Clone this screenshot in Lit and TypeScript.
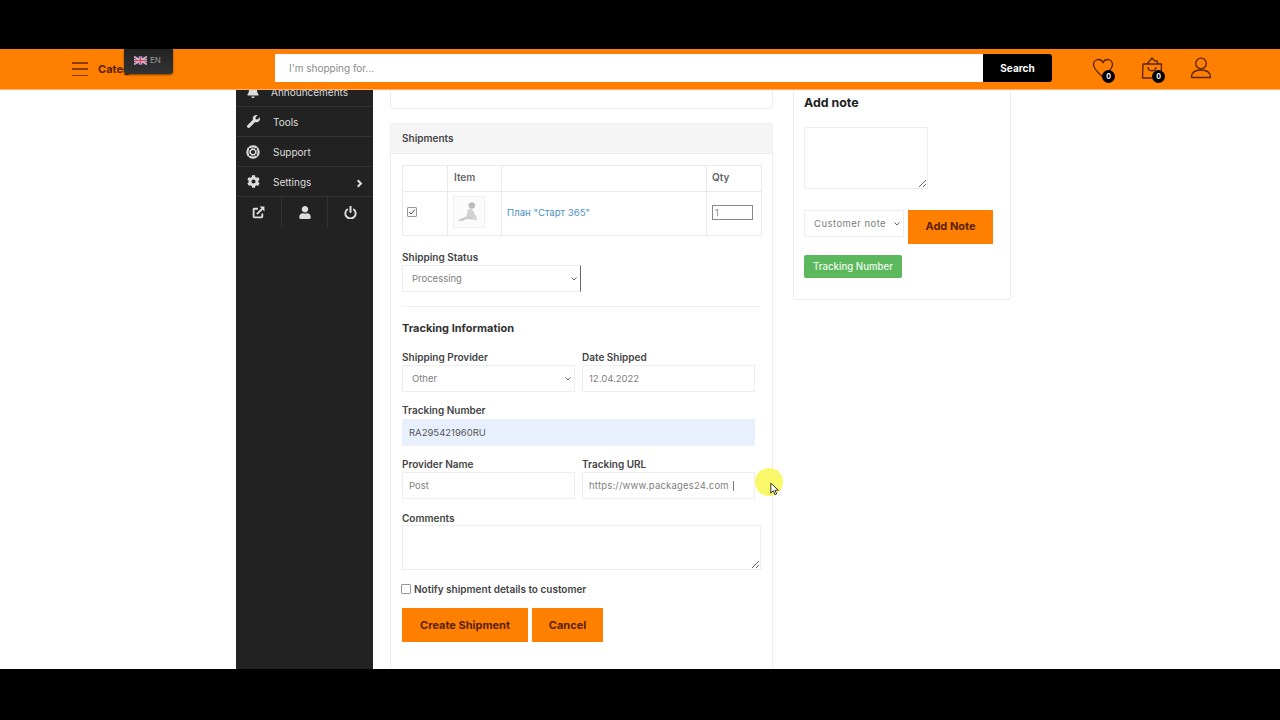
import { LitElement, html, css, svg } from "lit";
import { customElement } from "lit/decorators.js";

const ICON = {
  bell: svg`<svg viewBox="0 0 448 512" width="12" height="13"><path fill="currentColor" d="M224 512c35.32 0 63.97-28.65 63.97-64H160.03c0 35.35 28.65 64 63.97 64zm215.39-149.71c-19.32-20.76-55.47-51.99-55.47-154.29 0-77.7-54.48-139.9-127.94-155.16V32c0-17.67-14.32-32-31.98-32s-31.98 14.33-31.98 32v20.84C118.56 68.1 64.08 130.3 64.08 208c0 102.3-36.15 133.53-55.47 154.29-6 6.45-8.66 14.16-8.61 21.71.11 16.4 12.98 32 32.1 32h383.8c19.12 0 32-15.6 32.1-32 .05-7.55-2.61-15.27-8.61-21.71z"/></svg>`,
  wrench: svg`<svg viewBox="0 0 512 512" width="13" height="13"><path fill="currentColor" d="M507.73 109.1c-2.24-9.03-13.54-12.09-20.12-5.51l-74.36 74.36-67.88-11.31-11.31-67.88 74.36-74.36c6.62-6.62 3.43-17.9-5.66-20.16-47.38-11.74-99.55.91-136.58 37.93-39.64 39.64-50.55 97.1-34.05 147.2L18.74 402.76c-24.99 24.99-24.99 65.51 0 90.5 24.99 24.99 65.51 24.99 90.5 0l213.21-213.21c50.12 16.71 107.47 5.68 147.37-34.22 37.07-37.07 49.7-89.32 37.91-136.73z"/></svg>`,
  ring: svg`<svg viewBox="0 0 24 24" width="14" height="14"><circle cx="12" cy="12" r="11.500" fill="currentColor"/><circle cx="12" cy="12" r="7" fill="none" stroke="#222" stroke-width="1.500"/><circle cx="12" cy="12" r="3.600" fill="#222"/><path d="M4.500 4.500l4 4M19.500 4.500l-4 4M4.500 19.500l4-4M19.500 19.500l-4-4" stroke="#222" stroke-width="1.500"/></svg>`,
  cog: svg`<svg viewBox="0 0 512 512" width="13" height="13"><path fill="currentColor" d="M487.4 315.7l-42.6-24.6c4.3-23.2 4.3-47 0-70.2l42.6-24.6c4.9-2.8 7.1-8.6 5.5-14-11.1-35.6-30-67.8-54.7-94.6-3.8-4.1-10-5.1-14.8-2.3L380.8 110c-17.9-15.4-38.5-27.3-60.8-35.1V25.8c0-5.6-3.9-10.5-9.4-11.7-36.7-8.2-74.3-7.8-109.2 0-5.5 1.2-9.4 6.1-9.4 11.7V75c-22.2 7.9-42.8 19.8-60.8 35.1L88.7 85.5c-4.9-2.8-11-1.9-14.8 2.3-24.7 26.7-43.6 58.9-54.7 94.6-1.7 5.4.6 11.2 5.5 14L67.3 221c-4.3 23.2-4.3 47 0 70.2l-42.6 24.6c-4.9 2.8-7.1 8.6-5.5 14 11.1 35.6 30 67.8 54.7 94.6 3.8 4.1 10 5.1 14.8 2.3l42.6-24.6c17.9 15.4 38.5 27.3 60.8 35.1v49.2c0 5.6 3.9 10.5 9.4 11.7 36.7 8.2 74.3 7.8 109.2 0 5.5-1.2 9.4-6.1 9.4-11.7v-49.2c22.2-7.9 42.8-19.8 60.8-35.1l42.6 24.6c4.9 2.8 11 1.9 14.8-2.3 24.7-26.7 43.6-58.9 54.7-94.6 1.5-5.5-.7-11.3-5.6-14.1zM256 336c-44.1 0-80-35.9-80-80s35.9-80 80-80 80 35.9 80 80-35.9 80-80 80z"/></svg>`,
  ext: svg`<svg viewBox="0 0 24 24" width="13" height="13"><path d="M19 14v6a1 1 0 0 1-1 1H4a1 1 0 0 1-1-1V6a1 1 0 0 1 1-1h7" fill="none" stroke="currentColor" stroke-width="3.400"/><path d="M9 15L19 5" stroke="currentColor" stroke-width="3.600"/><path d="M14 1h9v9z" fill="currentColor"/></svg>`,
  user: svg`<svg viewBox="0 0 448 512" width="12" height="13"><path fill="currentColor" d="M224 256c70.7 0 128-57.3 128-128S294.7 0 224 0 96 57.3 96 128s57.3 128 128 128zm89.6 32h-16.7c-22.2 10.2-46.9 16-72.9 16s-50.6-5.8-72.9-16h-16.7C60.2 288 0 348.2 0 422.4V464c0 26.5 21.5 48 48 48h352c26.5 0 48-21.5 48-48v-41.6c0-74.2-60.2-134.4-134.4-134.4z"/></svg>`,
  power: svg`<svg viewBox="0 0 24 24" width="13" height="13"><path d="M7 5.500a9.500 9.500 0 1 0 10 0" fill="none" stroke="currentColor" stroke-width="3.600"/><path d="M12 1v10" stroke="currentColor" stroke-width="3.800" stroke-linecap="round"/></svg>`,
  chev: svg`<svg viewBox="0 0 10 12" width="7" height="9"><path d="M2.500 1.500L7 6l-4.500 4.500" fill="none" stroke="currentColor" stroke-width="3"/></svg>`,
  heart: svg`<svg viewBox="0 0 24 24" width="24" height="24"><path d="M12 21C6 16 2.500 12.500 2.500 8.500 2.500 5.500 4.800 3.500 7.400 3.500c2 0 3.600 1 4.600 3 1-2 2.600-3 4.600-3 2.600 0 4.900 2 4.900 5 0 4-3.500 7.500-9.500 12.500z" fill="none" stroke="currentColor" stroke-width="1.300"/></svg>`,
  bag: svg`<svg viewBox="0 0 24 24" width="24" height="24"><path d="M3 8h18.500l-.5 14H2.500z" fill="none" stroke="currentColor" stroke-width="1.300" stroke-linejoin="round"/><path d="M7 8l5-6 3 3 2 0 1 3M8 11c0 5 8 5 8 0" fill="none" stroke="currentColor" stroke-width="1.300"/></svg>`,
  person: svg`<svg viewBox="0 0 24 24" width="24" height="24"><circle cx="12" cy="7.500" r="5.300" fill="none" stroke="currentColor" stroke-width="1.300"/><path d="M2.500 21.500c0-5 4-7.500 9.500-7.500s9.500 2.500 9.500 7.500z" fill="none" stroke="currentColor" stroke-width="1.300" stroke-linejoin="round"/></svg>`,
  flag: svg`<svg viewBox="0 0 60 36" width="13" height="9"><rect width="60" height="36" fill="#3b4a86"/><path d="M0 0l60 36M60 0L0 36" stroke="#eee" stroke-width="7"/><path d="M0 0l60 36M60 0L0 36" stroke="#d5405a" stroke-width="2.500"/><path d="M30 0v36M0 18h60" stroke="#eee" stroke-width="12"/><path d="M30 0v36M0 18h60" stroke="#d5405a" stroke-width="7"/></svg>`,
  baby: svg`<svg viewBox="0 0 32 32" width="30" height="30"><rect width="32" height="32" fill="#fbfbfb"/><circle cx="19" cy="9" r="3.500" fill="#bcbcbc"/><path d="M15 13c4-1 6 1 7 5l3 5-5-1-2 2-3-1-7 3-1-2 6-3z" fill="#d2d2d2"/><path d="M5 25l8-3 11 2" stroke="#c4c4c4" stroke-width="1.300" fill="none"/></svg>`,
  cursor: svg`<svg viewBox="0 0 12 16" width="10" height="14"><path d="M1 1v12l3-3 2 5 2-1-2-4.500h4z" fill="#fff" stroke="#222" stroke-width="1.100" stroke-linejoin="round"/></svg>`,
};

@customElement("app-root")
export class AppRoot extends LitElement {
  static styles = css`
    :host { display: block; width: 1280px; height: 720px; position: relative; overflow: hidden; background: #000; font-family: Inter, "Noto Sans", "Noto Sans CJK SC", sans-serif; color: #444; }
    * { box-sizing: border-box; }
    .letter { height: 49px; background: #000; }
    .floor { height: 51px; background: #000; }
    .header { height: 41px; background: #ff7f00; border-bottom: 1px solid #ffb066; display: flex; align-items: center; padding: 0 67px 0 72px; color: #5a2300; position: relative; z-index: 2; }
    .burger { width: 16px; height: 14px; display: flex; flex-direction: column; justify-content: space-between; }
    .burger i { display: block; height: 1.500px; background: #8a3a05; }
    .cat { font-size: 11px; font-weight: 700; margin-left: 10px; width: 177px; color: #5a2300; }
    .search { display: flex; width: 777px; height: 28px; margin-top: -3px; }
    .search input { flex: 1; border: 0; padding: 0 14px; font: 400 10px Inter, sans-serif; background: #fff; outline: none; color: #888; }
    .search input::placeholder { color: #8a8a8a; opacity: 1; }
    .search button { width: 69px; border: 0; background: #000; border-radius: 0 3px 3px 0; color: #fff; font: 700 10px Inter, sans-serif; }
    .hicons { display: flex; margin-left: 39px; gap: 25px; margin-top: -3px; }
    .hicon { width: 24px; height: 24px; position: relative; }
    .badge { position: absolute; right: 0; bottom: -3px; width: 13px; height: 13px; border-radius: 50%; background: #000; color: #fff; font-size: 7px; font-weight: 700; display: flex; align-items: center; justify-content: center; }
    .badge.bagb { right: -1px; }
    .lang { position: absolute; left: 124px; top: 49px; width: 49px; height: 25px; z-index: 3; background: linear-gradient(#222, #333); border-radius: 0 0 3px 3px; box-shadow: 0 1px 2px rgba(0,0,0,.5); display: flex; align-items: center; gap: 3px; padding: 0 0 3px 10px; color: #9a9a9a; font-size: 8px; }
    .body { height: 579px; background: #fff; display: flex; padding-left: 236px; overflow: hidden; }
    .side { width: 137px; background: #222; color: #ddd; flex: none; font-size: 10px; overflow: hidden; }
    .row { height: 30px; display: flex; align-items: center; padding: 1px 0 0 10px; border-bottom: 1px solid #333; position: relative; }
    .row:first-child { margin-top: -13px; }
    .row svg { flex: none; }
    .row .ic { width: 14px; display: flex; justify-content: center; margin: -1px 13px 0 0; }
    .row:first-child .ic { margin-right: 11px; }
    .row .chev { margin-left: auto; margin-right: 10px; margin-top: 3px; display: flex; }
    .tools { display: flex; height: 32px; padding-bottom: 2px; }
    .tools div { flex: 1; display: flex; align-items: center; justify-content: center; border-right: 1px solid #333; }
    .tools div:last-child { border: 0; }
    .left { width: 383px; margin-left: 17px; flex: none; }
    .frag { height: 19px; border: 1px solid #eee; border-top: 0; border-radius: 0 0 3px 3px; margin-bottom: 14px; }
    .card { border: 1px solid #eee; border-bottom: 0; border-radius: 3px 3px 0 0; height: 546px; }
    .cardhead { height: 30px; background: #f5f5f5; border-bottom: 1px solid #eee; display: flex; align-items: center; padding: 0 0 2px 11px; font-size: 10px; font-weight: 600; color: #444; }
    .cardbody { padding: 11px 11px 0; }
    table { border-collapse: collapse; width: 359px; table-layout: fixed; font-size: 10px; }
    td, th { border: 1px solid #eaeaea; padding: 0 5px 3px; text-align: left; font-weight: 600; color: #666; }
    th.item { padding-left: 6px; }
    thead tr { height: 26px; }
    tbody tr { height: 44px; }
    td { font-weight: 400; }
    .tick { width: 10px; height: 10px; border: 1px solid #999; border-radius: 1px; display: flex; align-items: center; justify-content: center; margin: 0 0 0 -1px; background: #fafafa; }
    .thumb { width: 32px; height: 32px; border: 1px solid #f0f0f0; display: flex; }
    a { color: #4a8fc4; text-decoration: none; font-size: 9.600px; }
    .qty { width: 41px; height: 15px; border: 1px solid #888; padding: 0 2px; font: 400 9px Inter, sans-serif; color: #888; display: block; }
    label { display: block; height: 15px; font-size: 10px; line-height: 15px; font-weight: 600; color: #444; }
    label.up { line-height: 13px; }
    label.down { line-height: 17px; }
    select, .inp { display: block; width: 100%; height: 27px; border: 1px solid #eee; background: #fff; color: #808080; font: 400 9.500px Inter, sans-serif; outline: none; border-radius: 0; }
    select { appearance: none; padding: 0 14px 0 9px; background-image: url("data:image/svg+xml,%3Csvg xmlns='http://www.w3.org/2000/svg' width='6' height='4'%3E%3Cpath d='M.5.5L3 3 5.500.5' fill='none' stroke='%23666' stroke-width='1'/%3E%3C/svg%3E"); background-repeat: no-repeat; background-position: right 3px center; }
    .inp { padding: 0 6px; }
    .inp.url { letter-spacing: .2px; }
    .status { width: 179px; border-right: 1px solid #666; }
    .gap14 { margin-top: 14px; }
    .divider { height: 1px; background: #f0f0f0; width: 358px; margin-top: 14px; }
    .title { font-size: 11px; font-weight: 700; line-height: 16px; margin-top: 13px; color: #333; }
    .grid { display: grid; grid-template-columns: 173px 173px; column-gap: 7px; width: 353px; }
    .m14 { margin-top: 14px; }
    .m12 { margin-top: 12px; }
    .m11 { margin-top: 11px; }
    .full { grid-column: 1 / 3; }
    .blue { background: #e8f0fe; border-color: #e8f0fe; color: #555; }
    textarea { display: block; border: 1px solid #eee; outline: none; }
    .comments { width: 359px; height: 45px; }
    .notify { display: flex; align-items: center; height: 10px; margin-top: 14px; margin-left: -1px; font-size: 10px; font-weight: 600; color: #444; gap: 3px; }
    .box { width: 10px; height: 10px; border: 1px solid #999; border-radius: 1px; background: #fff; flex: none; }
    .btns { display: flex; gap: 4px; margin-top: 14px; }
    .btn { height: 34px; border: 0; background: #ff7f00; color: #5a1f00; font: 700 11px Inter, sans-serif; padding: 0 0 1px; }
    .w126 { width: 126px; }
    .w71 { width: 71px; }
    .right { width: 218px; height: 210px; margin-left: 20px; flex: none; border: 1px solid #eee; border-top: 0; border-radius: 0 0 3px 3px; padding: 0 0 0 10px; }
    .rt { font-size: 12.400px; font-weight: 700; color: #222; line-height: 16px; margin-top: 5px; }
    .note { width: 124px; height: 62px; margin-top: 16px; }
    .rowb { display: flex; gap: 4px; margin-top: 21px; align-items: flex-start; }
    .rowb select { width: 100px; letter-spacing: .45px; }
    .w85 { width: 85px; padding-bottom: 2px; }
    .green { display: block; margin-top: 11px; width: 98px; height: 23px; padding: 0 0 1px; background: #5cb85c; color: #eef8ee; border: 0; border-radius: 2px; font: 500 9.700px Inter, sans-serif; }
    .halo { position: absolute; left: 755px; top: 468px; width: 28px; height: 28px; border-radius: 50%; background: #f8f868; z-index: 4; pointer-events: none; }
    .cursor { position: absolute; left: 770px; top: 482px; z-index: 5; display: flex; }
    .caret { position: absolute; left: 733px; top: 481px; width: 1px; height: 10px; background: #777; }
  `;

  render() {
    return html`
      <div class="letter"></div>
      <div class="header">
        <div class="burger"><i></i><i></i><i></i></div>
        <div class="cat">Categories</div>
        <div class="search">
          <input placeholder="I'm shopping for..." />
          <button>Search</button>
        </div>
        <div class="hicons">
          <div class="hicon">${ICON.heart}<span class="badge">0</span></div>
          <div class="hicon">${ICON.bag}<span class="badge bagb">0</span></div>
          <div class="hicon">${ICON.person}</div>
        </div>
      </div>
      <div class="lang">${ICON.flag}<span>EN</span></div>
      <div class="body">
        <div class="side">
          <div class="row"><span class="ic">${ICON.bell}</span>Announcements</div>
          <div class="row"><span class="ic">${ICON.wrench}</span>Tools</div>
          <div class="row"><span class="ic">${ICON.ring}</span>Support</div>
          <div class="row"><span class="ic">${ICON.cog}</span>Settings<span class="chev">${ICON.chev}</span></div>
          <div class="tools"><div>${ICON.ext}</div><div>${ICON.user}</div><div>${ICON.power}</div></div>
        </div>
        <div class="left">
          <div class="frag"></div>
          <div class="card">
            <div class="cardhead">Shipments</div>
            <div class="cardbody">
              <table>
                <colgroup><col style="width:45px" /><col style="width:54px" /><col style="width:205px" /><col style="width:55px" /></colgroup>
                <thead><tr><th></th><th class="item">Item</th><th></th><th>Qty</th></tr></thead>
                <tbody><tr>
                  <td><div class="tick"><svg viewBox="0 0 10 10" width="8" height="8"><path d="M1.500 5l2.500 2.500L8.500 2" fill="none" stroke="#444" stroke-width="1.200"/></svg></div></td>
                  <td><div class="thumb">${ICON.baby}</div></td>
                  <td><a>План "Старт 365"</a></td>
                  <td><input class="qty" value="1" /></td>
                </tr></tbody>
              </table>
              <div class="gap14">
                <label>Shipping Status</label>
                <select class="status"><option>Processing</option></select>
              </div>
              <div class="divider"></div>
              <div class="title">Tracking Information</div>
              <div class="grid m14">
                <div><label>Shipping Provider</label><select><option>Other</option></select></div>
                <div><label>Date Shipped</label><input class="inp" value="12.04.2022" /></div>
                <div class="full m12"><label class="up">Tracking Number</label><input class="inp blue" value="RA295421960RU" /></div>
                <div class="m11"><label>Provider Name</label><input class="inp" value="Post" /></div>
                <div class="m11"><label>Tracking URL</label><input class="inp url" value="https://www.packages24.com" /></div>
              </div>
              <div class="m11">
                <label class="down">Comments</label>
                <textarea class="comments"></textarea>
              </div>
              <div class="notify"><span class="box"></span>Notify shipment details to customer</div>
              <div class="btns">
                <button class="btn w126">Create Shipment</button>
                <button class="btn w71">Cancel</button>
              </div>
            </div>
          </div>
        </div>
        <div class="right">
          <div class="rt">Add note</div>
          <textarea class="note"></textarea>
          <div class="rowb">
            <select><option>Customer note</option></select>
            <button class="btn w85">Add Note</button>
          </div>
          <button class="green">Tracking Number</button>
        </div>
      </div>
      <div class="floor"></div>
      <div class="caret"></div>
      <div class="halo"></div>
      <div class="cursor">${ICON.cursor}</div>
    `;
  }
}
